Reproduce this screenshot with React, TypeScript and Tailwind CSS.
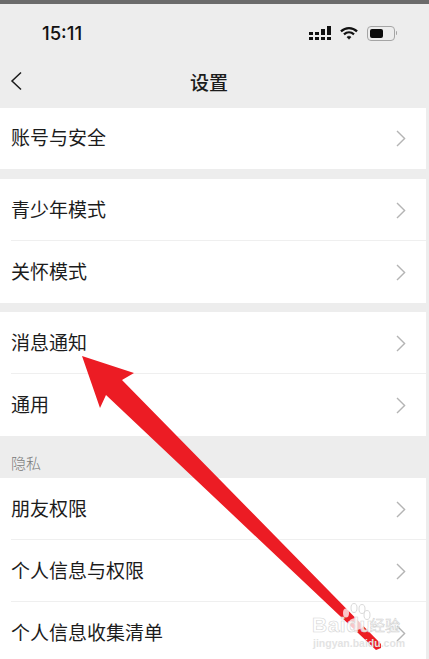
const cjk = { fontFamily: '"Noto Sans CJK SC", "Liberation Sans", sans-serif' };

function Row({ label, divider, short }: { label: string; divider?: boolean; short?: boolean }) {
  return (
    <div className={`relative flex items-center justify-between pl-[11px] pr-[20px] ${short ? "h-[61px]" : "h-[62px]"}`}>
      <span className="mb-[4px] text-[19px] font-normal leading-none text-[#1c1c1c]">{label}</span>
      <svg width="10" height="17" viewBox="0 0 10 17" fill="none" stroke="#b4b4b4" strokeWidth="1.4">
        <path d="M1 1 L8.6 8.5 L1 16" />
      </svg>
      {divider && <div className="absolute bottom-0 left-[11px] right-0 h-px bg-[#efefef]" />}
    </div>
  );
}

function Group({ labels, short }: { labels: string[]; short?: boolean }) {
  return (
    <div className="bg-white">
      {labels.map((label, i) => (
        <Row key={label} label={label} short={short} divider={i < labels.length - 1} />
      ))}
    </div>
  );
}

function StatusIcons() {
  return (
    <div className="flex items-center gap-[9px]">
      <svg width="22" height="16" viewBox="0 0 22 16" fill="#111">
        <rect x="0" y="7" width="4" height="3" />
        <rect x="0" y="12" width="4" height="3" />
        <rect x="6" y="7" width="4" height="3" />
        <rect x="6" y="12" width="4" height="3" />
        <rect x="12" y="4" width="4" height="6" />
        <rect x="12" y="12" width="4" height="3" />
        <rect x="18" y="1" width="4" height="9" />
        <rect x="18" y="12" width="4" height="3" />
      </svg>
      <svg width="18" height="15" viewBox="0 0 19 15" fill="none" stroke="#111" strokeWidth="2.4">
        <path d="M1 5.2 C6 0.6 13 0.6 18 5.2" />
        <path d="M4.2 8.4 C7.4 5.6 11.6 5.6 14.8 8.4" />
        <path d="M7.3 11.2 L9.5 13.6 L11.7 11.2 C10.4 10.1 8.6 10.1 7.3 11.2 Z" fill="#111" strokeWidth="0.6" />
      </svg>
      <div className="flex items-center gap-px">
        <div className="flex h-[15px] w-[28px] items-center rounded-[4px] border border-[#a5a5a5] p-[2px]">
          <div className="h-full w-[13px] rounded-[2px] bg-[#0c0c0c]" />
        </div>
        <div className="h-[4px] w-[1.5px] rounded-r bg-[#a5a5a5]" />
      </div>
    </div>
  );
}

function Overlay() {
  return (
    <svg className="absolute left-0 top-0" width="429" height="659" viewBox="0 0 429 659">
      <polygon
        points="82,356 134,373 122,380 381,644 381,648 376,650 106,395 100,408"
        fill="#ec1c24"
      />
      <g fill="#ffffff" opacity="0.75">
        <ellipse cx="346" cy="613" rx="3" ry="4.5" />
        <ellipse cx="354" cy="608" rx="3" ry="4.5" />
        <ellipse cx="362" cy="609" rx="3" ry="4.5" />
        <ellipse cx="367" cy="615" rx="3" ry="4.5" />
        <ellipse cx="356" cy="624" rx="8" ry="6" />
      </g>
      <g stroke="#dadada" strokeWidth="1" fill="none">
        <ellipse cx="354" cy="608" rx="3" ry="4.5" />
        <ellipse cx="362" cy="609" rx="3" ry="4.5" />
        <ellipse cx="367" cy="615" rx="3" ry="4.5" />
      </g>
    </svg>
  );
}

export default function App() {
  return (
    <div className="relative h-[659px] w-[429px] overflow-hidden bg-[#ededed] pr-[3px]" style={cjk}>
      <div className="-mr-[3px] h-[4px] bg-[#6b6b6b]" />
      <div className="flex h-[50px] items-center justify-between pl-[42px] pr-[29px] pt-[8px]">
        <span className="text-[18.5px] font-medium leading-none text-[#111]" style={{ fontFamily: '"Inter", sans-serif' }}>
          15:11
        </span>
        <StatusIcons />
      </div>
      <div className="relative flex h-[54px] items-center justify-center pr-[8px]">
        <svg className="absolute left-[10px] top-[17px]" width="13" height="20" viewBox="0 0 13 20" fill="none" stroke="#1a1a1a" strokeWidth="1.5">
          <path d="M11 1.5 L2 10 L11 18.5" />
        </svg>
        <span className="text-[19px] font-medium leading-none text-[#1c1c1c]">设置</span>
      </div>
      <div className="mb-[10px]">
        <Group labels={["账号与安全"]} short />
      </div>
      <div className="flex flex-col gap-[9px]">
        <Group labels={["青少年模式", "关怀模式"]} />
        <Group labels={["消息通知", "通用"]} />
      </div>
      <div className="flex h-[42px] items-center pl-[11px] pt-[10px] text-[15px] font-light leading-none text-[#7a7a7a]">隐私</div>
      <Group labels={["朋友权限", "个人信息与权限", "个人信息收集清单"]} />
      <Overlay />
      <div className="absolute left-[312px] top-[614px] text-[21px] font-semibold leading-none tracking-[0.5px] text-white/80" style={{ fontFamily: '"Liberation Sans", sans-serif', WebkitTextStroke: "0.6px #d5d5d5" }}>
        Baidu
      </div>
      <div className="absolute left-[370px] top-[617px] text-[15px] leading-none text-white/80" style={{ WebkitTextStroke: "0.5px #cfcfcf" }}>
        经验
      </div>
      <div className="absolute left-[313px] top-[638px] text-[10.5px] font-bold leading-none text-[#e3e3e3]" style={{ fontFamily: '"Liberation Sans", sans-serif' }}>
        jingyan.baidu.com
      </div>
    </div>
  );
}
